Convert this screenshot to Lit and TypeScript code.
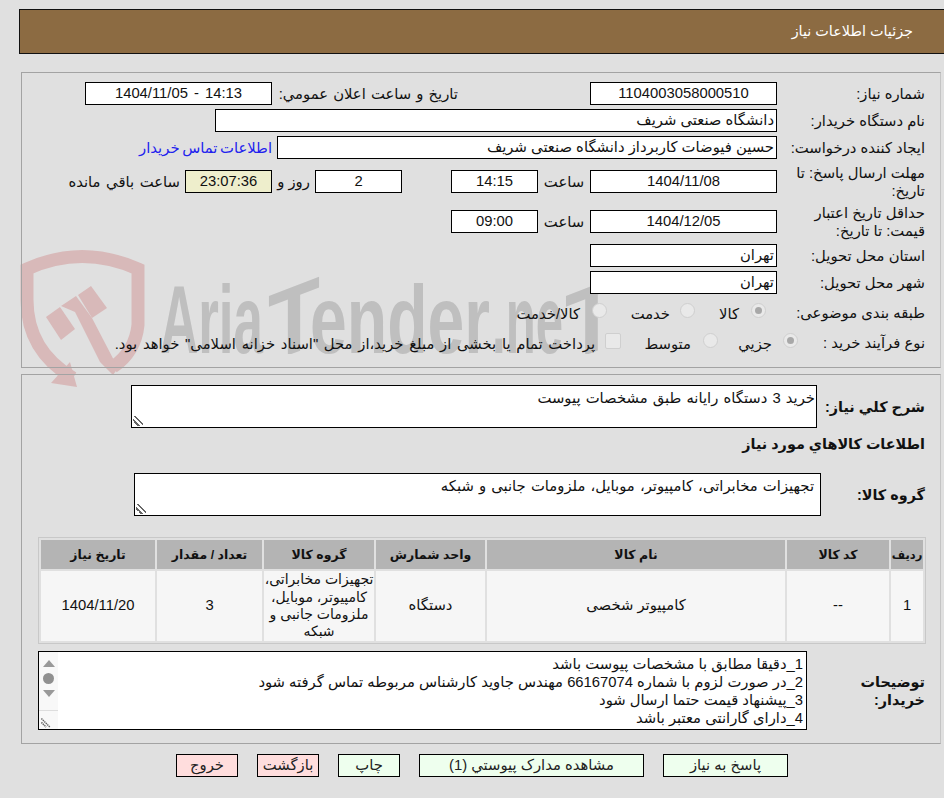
import { LitElement, html, css } from "lit";
import { customElement } from "lit/decorators.js";

@customElement("app-root")
export class AppRoot extends LitElement {
  static styles = css`
    :host {
      display: block;
      position: relative;
      isolation: isolate;
      width: 944px;
      height: 798px;
      overflow: hidden;
      background: #e0e0e0;
      color: #111;
      font-family: "Liberation Sans", "DejaVu Sans", sans-serif;
      font-size: 14.8px;
    }
    * { box-sizing: border-box; }
    .mark { position: absolute; left: 0; top: 0; z-index: -1; }
    .page { direction: rtl; padding-top: 9px; }
    .head {
      height: 45px;
      margin-left: 19px;
      background: #8c6b42;
      border: 1px solid #111;
      border-right: 0;
      color: #fff;
      padding: 13px 31px 0 0;
      font-size: 14.4px;
    }
    .panel {
      margin-left: 21px;
      margin-right: 3px;
      border: 1px solid #a3a3a3;
      border-right-color: #c4c4c4;
    }
    .p1 { margin-top: 18px; height: 296px; padding-top: 9px; }
    .p2 { margin-top: 6px; height: 370px; padding-top: 10px; position: relative; }
    .row { display: flex; align-items: center; }
    .lab { width: 163px; padding-right: 15px; line-height: 18px; flex: none; }
    .lab.short { width: 142px; white-space: nowrap; }
    .box {
      flex: none;
      height: 23px;
      background: #fff;
      border: 1px solid #000;
      text-align: center;
      line-height: 21px;
      white-space: nowrap;
      padding: 0 2px;
    }
    .w187 { width: 187px; }
    .w87 { width: 87px; }
    .w562 { width: 562px; }
    .w500 { width: 500px; }
    .rt { text-align: right; }
    .wide { word-spacing: 2px; }
    .txt { white-space: nowrap; flex: none; }
    .pub { margin-right: 132px; width: 186px; word-spacing: 1px; }
    .sa { width: 52px; text-align: center; }
    .roz { width: 43px; text-align: center; }
    .gap49 { margin-right: 49px; }
    .remain { margin-right: 5px; word-spacing: 1.5px; }
    .r1 { height: 23px; margin-bottom: 4px; }
    .r4 { height: 23px; margin-top: 11px; }
    .r5 { height: 23px; margin-top: 17px; }
    .r6 { height: 23px; margin-top: 11px; }
    .r7 { margin-bottom: 0; }
    .r8 { height: 24px; margin-top: 7px; }
    .r9 { height: 24px; margin-top: 6px; }
    .link { color: #2222ee; margin-right: 5px; white-space: nowrap; word-spacing: -1.5px; }
    .timer { background: #eeeecc; }
    .radio {
      flex: none;
      width: 15px;
      height: 15px;
      border-radius: 50%;
      background: #e9e9e9;
      border: 1px solid #cfcfcf;
      display: flex;
      align-items: center;
      justify-content: center;
      margin-top: -5px;
    }
    .radio.on::after {
      content: "";
      width: 7px;
      height: 7px;
      border-radius: 50%;
      background: #a8a8a8;
    }
    .check {
      flex: none;
      width: 16px;
      height: 16px;
      border-radius: 2px;
      background: #e9e9e9;
      border: 1px solid #cfcfcf;
      margin-top: -5px;
    }
    .s11 { margin-right: 11px; }
    .o1 { margin-right: 12px; width: 44px; }
    .o2 { margin-right: 10px; width: 63px; }
    .o3 { margin-right: 12px; }
    .j1 { margin-right: 11px; width: 54px; }
    .j2 { margin-right: 12px; width: 70px; }
    .j3 { margin-right: 10px; word-spacing: 1.6px; }
    .bold { font-weight: bold; font-size: 14.4px; }
    .area {
      display: block;
      flex: none;
      background: #fff;
      border: 1px solid #000;
      border-radius: 0;
      font: inherit;
      color: inherit;
      direction: rtl;
      padding: 3px 1px 0;
      outline: none;
      margin: 0;
      overflow: hidden;
      word-spacing: 1px;
    }
    .area::-webkit-resizer {
      background: linear-gradient(45deg, transparent 25%, #666 25% 37%, transparent 37% 52%, #666 52% 64%, transparent 64%) no-repeat left 1px bottom 1px / 10px 10px;
    }
    .a1 { width: 686px; height: 43px; }
    .a2 { width: 687px; height: 43px; padding-right: 6px; }
    .l2 { width: 123px; padding-right: 15px; flex: none; }
    .heading { margin: 7px 15px 0 0; height: 19px; line-height: 19px; }
    .gr { margin-top: 19px; }
    .l3 { width: 119px; }
    .tbl {
      border-collapse: separate;
      border-spacing: 2px;
      border: 1px solid #c8c8c8;
      margin: 21px 14px 0 0;
      width: 888px;
      table-layout: fixed;
      text-align: center;
    }
    .tbl th {
      background: #b4b4b4;
      height: 29px;
      padding: 0;
      font-size: 12.5px;
      white-space: nowrap;
    }
    .tbl th.first { font-size: 11.5px; }
    .tbl td {
      background: #f6f6f6;
      height: 70px;
      padding: 0 2px;
      line-height: 17.4px;
    }
    .tbl td.gc { padding: 0; font-size: 14px; }
    .c1 { width: 32px; }
    .c2 { width: 102px; }
    .c3 { width: 298px; }
    .c4 { width: 109px; }
    .c5 { width: 110px; }
    .c6 { width: 105px; }
    .c7 { width: 114px; }
    .nr { margin-top: 7px; align-items: stretch; }
    .l4 { width: 133px; align-self: center; line-height: 18px; }
    .notes {
      flex: none;
      width: 769px;
      height: 79px;
      background: #fff;
      border: 1px solid #000;
      display: flex;
      line-height: 18px;
    }
    .ntext { flex: 1; padding: 3px 3px 0; white-space: nowrap; overflow: hidden; }
    .bar {
      flex: none;
      width: 19px;
      background: #f8f8f8;
      display: flex;
      flex-direction: column;
      align-items: center;
      padding-top: 8px;
      gap: 5px;
    }
    .up { width: 0; height: 0; border: 6.5px solid transparent; border-top: 0; border-bottom: 7px solid #999; }
    .down { width: 0; height: 0; border: 6.5px solid transparent; border-bottom: 0; border-top: 7px solid #999; }
    .dot { width: 11px; height: 11px; border-radius: 50%; background: #909090; margin: 1px 0; }
    .grip { margin-top: auto; width: 19px; height: 19px; border-top: 1px solid #ddd; display: block; }
    .btns { display: flex; justify-content: flex-start; margin: 10px 156px 0 0; gap: 19px; }
    .btn {
      flex: none;
      height: 23px;
      border: 1px solid #000;
      background: #eeffee;
      color: #222;
      text-align: center;
      line-height: 21px;
      white-space: nowrap;
    }
    .b125 { width: 125px; }
    .b225 { width: 225px; }
    .b62 { width: 62px; }
    .pink { background: #ffdddd; }
  `;

  render() {
    const radio = (on = false) => html`<span class="radio ${on ? "on" : ""}"></span>`;
    return html`
      <svg class="mark" width="944" height="798" viewBox="0 0 944 798">
        <defs>
          <clipPath id="base"><rect x="0" y="0" width="944" height="354" /></clipPath>
        </defs>
        <g fill="#d8b9b9">
          <path d="M73 378 C46 362 27 338 27 300 L27 269 Q82 244 138 269 L138 325 C136 345 126 358 113 367" fill="none" stroke="#d8b9b9" stroke-width="13"/>
          <polygon points="70,362 77,387 51,383"/>
          <polygon points="46,317 60,307 75,329 61,340"/>
          <polygon points="61,306 76,296 92,318 118,368 113,375 100,362 75,312"/>
          <polygon points="78,295 91,286 107,308 92,318"/>
        </g>
        <g fill="#bfbfbf" font-family="'Liberation Sans', sans-serif" font-weight="bold" clip-path="url(#base)">
          <text x="160" y="353" font-size="96" textLength="103" lengthAdjust="spacingAndGlyphs">Aria</text>
          <text transform="translate(268 363) skewY(-21)" font-size="97" textLength="52" lengthAdjust="spacingAndGlyphs">T</text>
          <text x="310" y="353" font-size="96" textLength="180" lengthAdjust="spacingAndGlyphs">ender</text>
          <text x="492" y="353" font-size="96" textLength="71" lengthAdjust="spacingAndGlyphs">.ne</text>
          <text transform="translate(565 363) skewY(-21)" font-size="97" textLength="53" lengthAdjust="spacingAndGlyphs">T</text>
        </g>
      </svg>
      <div class="page">
        <div class="head">جزئیات اطلاعات نیاز</div>

        <div class="panel p1">
          <div class="row r1">
            <div class="lab">شماره نياز:</div>
            <div class="box w187">1104003058000510</div>
            <div class="txt pub">تاریخ و ساعت اعلان عمومي:</div>
            <div class="box w187 wide">14:13 - 1404/11/05</div>
          </div>
          <div class="row r1">
            <div class="lab">نام دستگاه خریدار:</div>
            <div class="box w562 rt">دانشگاه صنعتی شریف</div>
          </div>
          <div class="row r1">
            <div class="lab">ایجاد کننده درخواست:</div>
            <div class="box w500 rt">حسین فیوضات کاربرداز دانشگاه صنعتی شریف</div>
            <div class="link">اطلاعات تماس خریدار</div>
          </div>
          <div class="row r4">
            <div class="lab">مهلت ارسال پاسخ: تا تاریخ:</div>
            <div class="box w187">1404/11/08</div>
            <div class="txt sa">ساعت</div>
            <div class="box w87">14:15</div>
            <div class="box w87 gap49">2</div>
            <div class="txt roz">روز و</div>
            <div class="box w87 timer">23:07:36</div>
            <div class="txt remain">ساعت باقي مانده</div>
          </div>
          <div class="row r5">
            <div class="lab">حداقل تاریخ اعتبار قیمت: تا تاریخ:</div>
            <div class="box w187">1404/12/05</div>
            <div class="txt sa">ساعت</div>
            <div class="box w87">09:00</div>
          </div>
          <div class="row r6 r1">
            <div class="lab">استان محل تحویل:</div>
            <div class="box w187 rt">تهران</div>
          </div>
          <div class="row r1 r7">
            <div class="lab">شهر محل تحویل:</div>
            <div class="box w187 rt">تهران</div>
          </div>
          <div class="row r8">
            <div class="lab">طبقه بندی موضوعی:</div>
            <span class="s11"></span>${radio(true)}
            <div class="txt o1">کالا</div>
            ${radio()}
            <div class="txt o2">خدمت</div>
            ${radio()}
            <div class="txt o3">کالا/خدمت</div>
          </div>
          <div class="row r9">
            <div class="lab short">نوع فرآیند خرید :</div>
            ${radio(true)}
            <div class="txt j1">جزیي</div>
            ${radio()}
            <div class="txt j2">متوسط</div>
            <span class="check"></span>
            <div class="txt j3">پرداخت تمام یا بخشی از مبلغ خرید،از محل "اسناد خزانه اسلامی" خواهد بود.</div>
          </div>
        </div>

        <div class="panel p2">
          <div class="row">
            <div class="l2 bold">شرح کلي نياز:</div>
            <textarea class="area a1" readonly>خرید 3 دستگاه رایانه طبق مشخصات پیوست</textarea>
          </div>
          <div class="heading bold">اطلاعات کالاهاي مورد نياز</div>
          <div class="row gr">
            <div class="l2 l3 bold">گروه کالا:</div>
            <textarea class="area a2" readonly>تجهیزات مخابراتی، کامپیوتر، موبایل، ملزومات جانبی و شبکه</textarea>
          </div>
          <table class="tbl">
            <colgroup>
              <col class="c1" /><col class="c2" /><col class="c3" />
              <col class="c4" /><col class="c5" /><col class="c6" /><col class="c7" />
            </colgroup>
            <tr>
              <th class="first">ردیف</th><th>کد کالا</th><th>نام کالا</th><th>واحد شمارش</th><th>گروه کالا</th><th>تعداد / مقدار</th><th>تاریخ نیاز</th>
            </tr>
            <tr>
              <td>1</td>
              <td>--</td>
              <td>کامپیوتر شخصی</td>
              <td>دستگاه</td>
              <td class="gc">تجهیزات مخابراتی، کامپیوتر، موبایل، ملزومات جانبی و شبکه</td>
              <td>3</td>
              <td>1404/11/20</td>
            </tr>
          </table>
          <div class="row nr">
            <div class="l2 l4 bold">توضیحات<br />خریدار:</div>
            <div class="notes">
              <div class="ntext">
                <div>1_دقیقا مطابق با مشخصات پیوست باشد</div>
                <div>2_در صورت لزوم با شماره 66167074 مهندس جاوید کارشناس مربوطه تماس گرفته شود</div>
                <div>3_پیشنهاد قیمت حتما ارسال شود</div>
                <div>4_دارای گارانتی معتبر باشد</div>
              </div>
              <div class="bar">
                <div class="up"></div>
                <div class="dot"></div>
                <div class="down"></div>
                <svg class="grip" viewBox="0 0 19 19">
                  <path d="M2 8 L11 17 M2 12 L7 17" stroke="#666" stroke-width="1.6" stroke-dasharray="1.5 0.7" fill="none" />
                </svg>
              </div>
            </div>
          </div>
        </div>

        <div class="btns">
          <div class="btn b125">پاسخ به نیاز</div>
          <div class="btn b225">مشاهده مدارک پیوستي (1)</div>
          <div class="btn b62">چاپ</div>
          <div class="btn b62 pink">بازگشت</div>
          <div class="btn b62 pink">خروج</div>
        </div>
      </div>
    `;
  }
}
